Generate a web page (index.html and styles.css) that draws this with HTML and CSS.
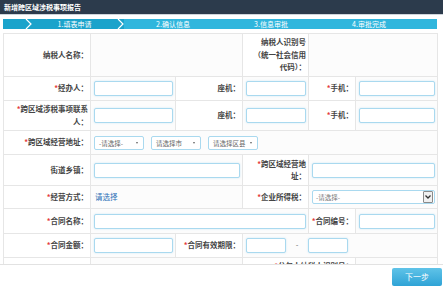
FILE: index.html
```html
<!DOCTYPE html>
<html lang="zh-CN">
<head>
    <meta charset="UTF-8">
    <meta name="viewport" content="width=device-width, initial-scale=1.0">
    <title>新增跨区域涉税事项报告</title>
    <link rel="stylesheet" href="styles.css">
</head>
<body>
    <div class="page">
        <div class="title-bar">新增跨区域涉税事项报告</div>

        <div class="content">
            <div class="steps">
                <div class="step active">
                    <svg class="chevron" width="7" height="10" viewBox="0 0 7 10"><polyline points="1,0 6,5 1,10" fill="none" stroke="#fff" stroke-width="1.2"/></svg>
                    <span class="step-text">1.填表申请</span>
                    <svg class="chevron" width="7" height="10" viewBox="0 0 7 10"><polyline points="1,0 6,5 1,10" fill="none" stroke="#fff" stroke-width="1.2"/></svg>
                </div>
                <div class="step">2.确认信息</div>
                <div class="step">3.信息审批</div>
                <div class="step">4.审批完成</div>
            </div>

            <table class="form-table">
                <colgroup>
                    <col style="width: 87px">
                    <col style="width: 85px">
                    <col style="width: 67px">
                    <col style="width: 66px">
                    <col style="width: 47px">
                    <col style="width: 82px">
                </colgroup>
                <tr class="row-r1">
                    <td class="label">纳税人名称：</td>
                    <td class="value" colspan="2"></td>
                    <td class="label">纳税人识别号<br>（统一社会信用<br>代码）：</td>
                    <td class="value" colspan="2"></td>
                </tr>
                <tr class="row-r2">
                    <td class="label"><i>*</i>经办人：</td>
                    <td class="value"><input class="ipt" type="text"></td>
                    <td class="label">座机：</td>
                    <td class="value"><input class="ipt" type="text"></td>
                    <td class="label"><i>*</i>手机：</td>
                    <td class="value"><input class="ipt" type="text"></td>
                </tr>
                <tr class="row-r3">
                    <td class="label"><i>*</i>跨区域涉税事项联系人：</td>
                    <td class="value"><input class="ipt" type="text"></td>
                    <td class="label">座机：</td>
                    <td class="value"><input class="ipt" type="text"></td>
                    <td class="label"><i>*</i>手机：</td>
                    <td class="value"><input class="ipt" type="text"></td>
                </tr>
                <tr class="row-r4">
                    <td class="label"><i>*</i>跨区域经营地址：</td>
                    <td class="value" colspan="5">
                        <div class="select-group">
                            <div class="pick">-请选择-</div>
                            <div class="pick">请选择市</div>
                            <div class="pick">请选择区县</div>
                        </div>
                    </td>
                </tr>
                <tr class="row-r5">
                    <td class="label">街道乡镇：</td>
                    <td class="value" colspan="2"><input class="ipt" type="text"></td>
                    <td class="label"><i>*</i>跨区域经营地址：</td>
                    <td class="value" colspan="2"><input class="ipt" type="text"></td>
                </tr>
                <tr class="row-r6">
                    <td class="label"><i>*</i>经营方式：</td>
                    <td class="value" colspan="2"><a class="link" href="#">请选择</a></td>
                    <td class="label"><i>*</i>企业所得税：</td>
                    <td class="value" colspan="2">
                        <div class="native-select">
                            <span>-请选择-</span>
                            <span class="drop-btn">
                                <svg width="6" height="4" viewBox="0 0 6 4"><polyline points="0.5,0.5 3,3 5.5,0.5" fill="none" stroke="#333" stroke-width="1.3"/></svg>
                            </span>
                        </div>
                    </td>
                </tr>
                <tr class="row-r7">
                    <td class="label"><i>*</i>合同名称：</td>
                    <td class="value" colspan="3"><input class="ipt" type="text"></td>
                    <td class="label"><i>*</i>合同编号：</td>
                    <td class="value"><input class="ipt" type="text"></td>
                </tr>
                <tr class="row-r8">
                    <td class="label"><i>*</i>合同金额：</td>
                    <td class="value"><input class="ipt" type="text"></td>
                    <td class="label"><i>*</i>合同有效期限：</td>
                    <td class="value" colspan="3">
                        <div class="date-range">
                            <input class="ipt date" type="text">
                            <span class="dash">-</span>
                            <input class="ipt date" type="text">
                        </div>
                    </td>
                </tr>
                <tr class="row-r9">
                    <td class="label"></td>
                    <td class="value" colspan="2"></td>
                    <td class="label" colspan="2"><i>*</i>分包人纳税人识别号：</td>
                    <td class="value"></td>
                </tr>
            </table>
        </div>

        <div class="footer">
            <button class="next-btn">下一步</button>
        </div>
    </div>
</body>
</html>
```

FILE: styles.css
```css
html, body {
    margin: 0;
    padding: 0;
    height: 100%;
    overflow: hidden;
    background-color: #fff;
    font-family: "Noto Sans CJK SC", "Liberation Sans", sans-serif;
    font-size: 7.5px;
    color: #333;
}
.page {
    height: 100vh;
    display: flex;
    flex-direction: column;
}
.title-bar {
    height: 14px;
    line-height: 14px;
    padding-left: 4px;
    background-color: #2c3b4c;
    border-bottom: 1px solid #cfd5db;
    color: #fff;
    font-size: 7px;
    font-weight: bold;
}
.content {
    flex: 1;
    overflow: hidden;
    padding: 4px 6px 0 3px;
}
.steps {
    display: flex;
    height: 10px;
    background-color: #30b6dd;
    color: #fff;
    font-size: 7px;
    line-height: 10px;
}
.step {
    width: 98px;
    text-align: center;
}
.step.active {
    width: 99px;
    display: flex;
    align-items: center;
    padding-left: 22px;
    background-color: #1ba3cb;
}
.step-text {
    flex: 1;
    text-align: center;
}
.chevron {
    display: block;
}
.form-table {
    width: 434px;
    margin-top: 4px;
    table-layout: fixed;
    border-collapse: collapse;
    border: 1px solid #e4e4e4;
}
.form-table td {
    border: 1px solid #e6e6e6;
    vertical-align: middle;
    line-height: 12.5px;
}
.form-table td.label {
    text-align: right;
    padding: 0 2px 0 1px;
    font-weight: bold;
    color: #444;
}
.form-table td.value {
    padding: 0 2px 0 3px;
    background-color: #fcfcfc;
}
.label i {
    font-style: normal;
    color: #e43b3b;
}
.row-r1 td { height: 42px; }
.row-r2 td { height: 23px; }
.row-r3 td { height: 29px; }
.row-r4 td { height: 23px; }
.row-r5 td { height: 30px; }
.row-r6 td { height: 22px; }
.row-r7 td { height: 24px; }
.row-r8 td { height: 23px; }
.row-r9 td {
    height: 30px;
    vertical-align: top;
    padding-top: 2px;
}
.form-table .row-r9 td.label {
    padding-top: 2px;
}
.ipt {
    display: block;
    width: 100%;
    height: 15px;
    box-sizing: border-box;
    margin: 0;
    border: 1px solid #a9d9ef;
    border-radius: 2px;
    background-color: #fff;
    box-shadow: 0 0 2px rgba(102, 185, 233, 0.35);
    outline: none;
}
.select-group {
    display: flex;
    gap: 7px;
}
.pick {
    position: relative;
    width: 50px;
    height: 14px;
    box-sizing: border-box;
    padding-left: 4px;
    border: 1px solid #a9d9ef;
    border-radius: 2px;
    background-color: #fff;
    font-size: 6.5px;
    line-height: 12px;
    color: #666;
}
.pick::after {
    content: "";
    position: absolute;
    right: 5px;
    top: 5px;
    border-left: 1.5px solid transparent;
    border-right: 1.5px solid transparent;
    border-top: 2px solid #666;
}
.link {
    color: #2b6fb6;
    text-decoration: none;
    padding-left: 1px;
}
.native-select {
    display: flex;
    align-items: center;
    justify-content: space-between;
    height: 14px;
    box-sizing: border-box;
    padding-left: 3px;
    border: 1px solid #a9d9ef;
    border-radius: 2px;
    background-color: #fff;
    font-size: 6.5px;
    color: #777;
}
.drop-btn {
    display: flex;
    align-items: center;
    justify-content: center;
    width: 8px;
    height: 10px;
    margin-right: 1px;
    border: 1px solid #8a8a8a;
    border-radius: 1px;
    background-color: #f0f0f0;
}
.date-range {
    display: flex;
    align-items: center;
}
.ipt.date {
    width: 40px;
}
.dash {
    width: 22px;
    text-align: center;
    color: #666;
}
.footer {
    height: 18px;
    overflow: hidden;
    display: flex;
    justify-content: flex-end;
    padding: 3px 1px 0 0;
    border-top: 1px solid #e2e2e2;
    background-color: #fff;
}
.next-btn {
    width: 50px;
    height: 18px;
    flex-shrink: 0;
    border: none;
    border-radius: 2px;
    background: linear-gradient(#5fc3e8, #2fa3d6);
    color: #fff;
    font-family: "Noto Sans CJK SC", "Liberation Sans", sans-serif;
    font-size: 8px;
    line-height: 18px;
    padding: 0;
}
```
